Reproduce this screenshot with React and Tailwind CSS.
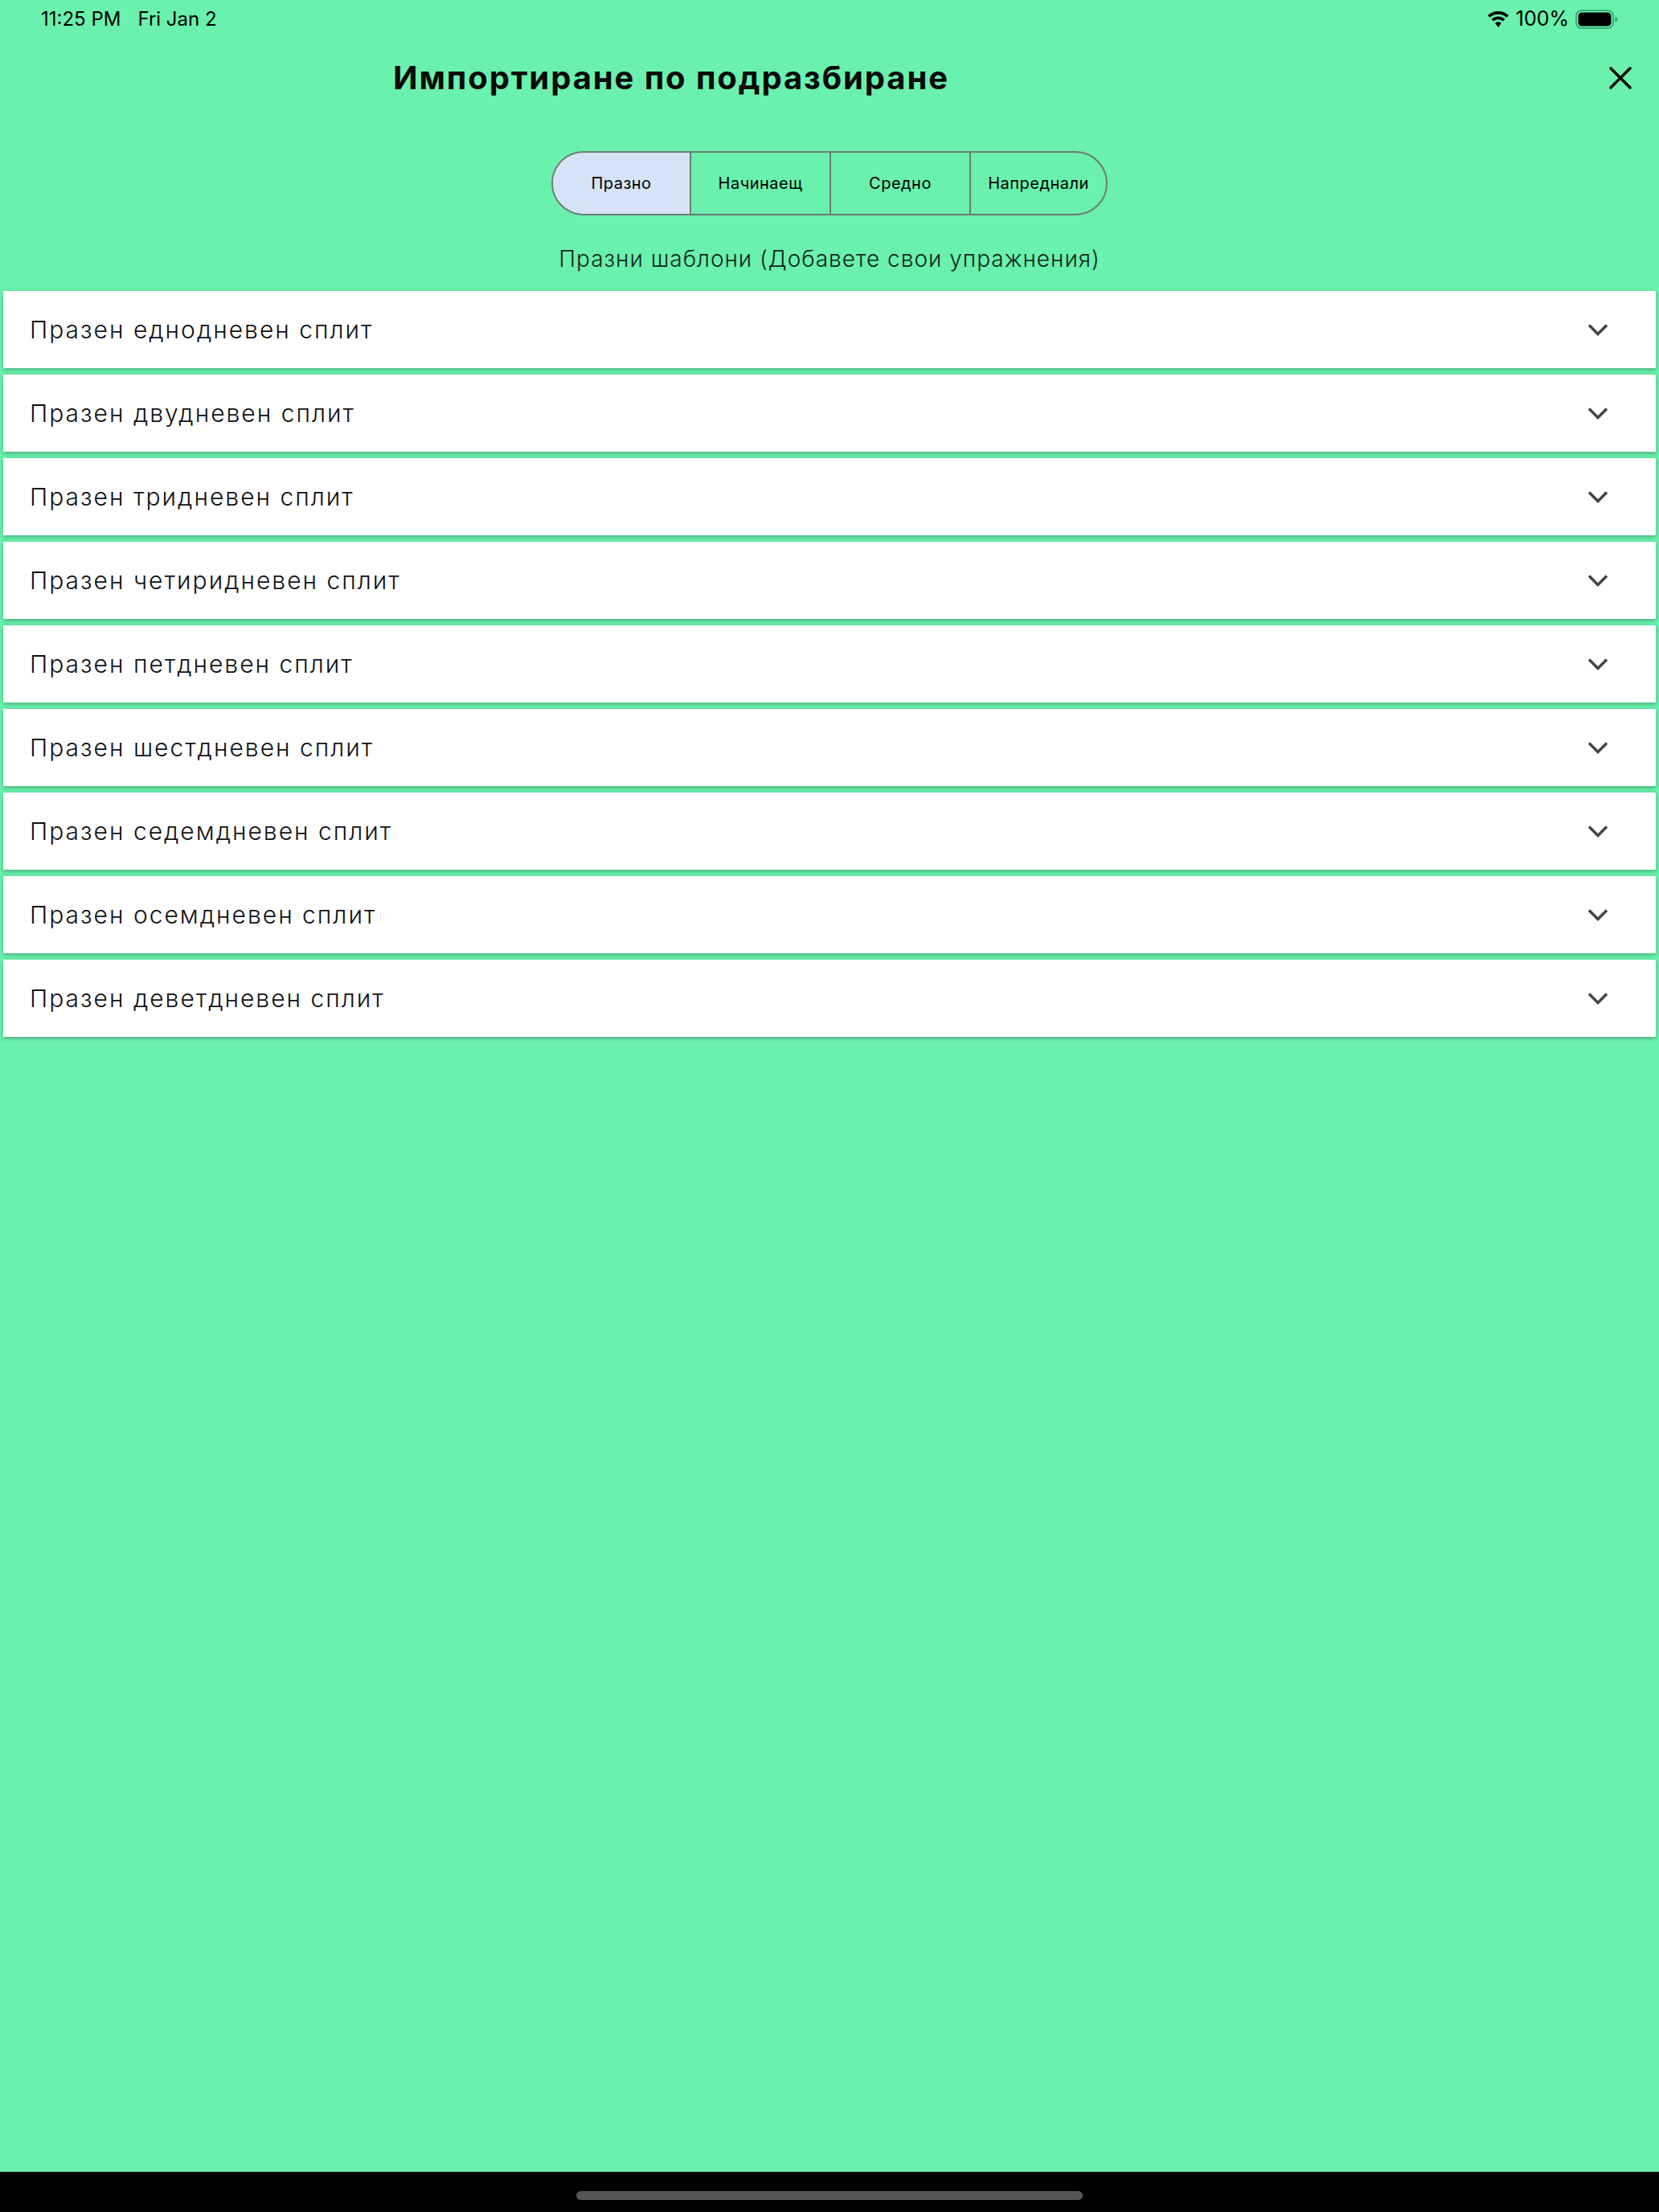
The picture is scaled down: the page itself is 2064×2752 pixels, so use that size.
const SPLITS = [
  'Празен еднодневен сплит',
  'Празен двудневен сплит',
  'Празен тридневен сплит',
  'Празен четиридневен сплит',
  'Празен петдневен сплит',
  'Празен шестдневен сплит',
  'Празен седемдневен сплит',
  'Празен осемдневен сплит',
  'Празен деветдневен сплит',
];

const TABS = [
  { label: 'Празно', className: 'w-[170px] bg-[#d6e3f7]' },
  { label: 'Начинаещ', className: 'w-[174px] border-l-2 border-[#6f7a74]' },
  { label: 'Средно', className: 'w-[174px] border-l-2 border-[#6f7a74]' },
  { label: 'Напреднали', className: 'flex-1 border-l-2 border-[#6f7a74]' },
];

function WifiIcon() {
  return (
    <svg width="28" height="21" viewBox="0 0 28 21" fill="black">
      <path d="M14 3.800c4 0 7.600 1.500 10.300 4.100l2.700-2.800C23.600 1.900 19 0 14 0S4.400 1.900 1 5.100l2.700 2.800C6.400 5.300 10 3.800 14 3.800z" />
      <path d="M14 10.300c2.200 0 4.200.8 5.700 2.200l2.700-2.800c-2.200-2-5.200-3.300-8.400-3.300s-6.200 1.300-8.400 3.300l2.700 2.800c1.500-1.400 3.500-2.200 5.700-2.200z" />
      <path d="M14 13.200c-1.500 0-2.900.6-3.900 1.500L14 20l3.900-5.300c-1-.9-2.400-1.500-3.900-1.500z" />
    </svg>
  );
}

function BatteryIcon() {
  return (
    <svg width="52" height="24" viewBox="0 0 52 24">
      <rect x="1" y="1" width="46" height="22" rx="6.500" fill="none" stroke="#2f9c6c" strokeWidth="1.500" />
      <rect x="3.500" y="3.500" width="41" height="17" rx="4.500" fill="black" />
      <path d="M49.500 8.500c1.500.5 2.500 2 2.500 3.500s-1 3-2.500 3.500z" fill="#2f9c6c" />
    </svg>
  );
}

function Chevron() {
  return (
    <svg width="26" height="16" viewBox="0 0 26 16" fill="none" stroke="#444444" strokeWidth="3.500">
      <path d="M2 2.500l11 11 11-11" />
    </svg>
  );
}

export default function App() {
  return (
    <div lang="bg" className="w-[2064px] h-[2752px] flex flex-col bg-[#69f1ad] text-black font-['Inter','Noto_Sans',sans-serif]">
      {/* status bar */}
      <div className="h-[48px] pl-[51px] pr-[52px] flex items-center justify-between text-[24px] font-normal">
        <div className="flex gap-[21px]">
          <span>11:25 PM</span>
          <span>Fri Jan 2</span>
        </div>
        <div className="flex items-center">
          <WifiIcon />
          <span className="ml-[8px] mr-[8px] text-[25px]">100%</span>
          <BatteryIcon />
        </div>
      </div>

      {/* header */}
      <div className="h-[98px] pl-[489px] pr-[33px] flex items-center justify-between">
        <h1 className="text-[40px] font-bold tracking-[1.900px] text-[#0a0a0a]">Импортиране по подразбиране</h1>
        <svg width="30" height="30" viewBox="0 0 30 30" fill="none" stroke="black" strokeWidth="3.500" strokeLinecap="round">
          <path d="M3 3l24 24M27 3L3 27" />
        </svg>
      </div>

      {/* level tabs */}
      <div className="mt-[42px] flex justify-center">
        <div className="w-[692px] h-[80px] flex rounded-[40px] border-2 border-[#6f7a74] overflow-hidden">
          {TABS.map((tab) => (
            <div key={tab.label} className={`flex items-center justify-center text-[20px] tracking-[0.5px] ${tab.className}`}>
              {tab.label}
            </div>
          ))}
        </div>
      </div>

      <p className="mt-[34px] h-[40px] flex items-center justify-center text-[28px] font-light tracking-[1px] text-[#10261b]">
        Празни шаблони (Добавете свои упражнения)
      </p>

      {/* split list */}
      <div className="mt-[20px] px-[4px] flex flex-col gap-[8px]">
        {SPLITS.map((name) => (
          <div
            key={name}
            className="h-[96px] pl-[33px] pr-[59px] flex items-center justify-between bg-white shadow-[0_2px_5px_rgba(0,0,0,0.28)]"
          >
            <span className="text-[30px] font-light tracking-[2px] text-[#111113]">{name}</span>
            <Chevron />
          </div>
        ))}
      </div>

      <div className="flex-1" />

      {/* home indicator */}
      <div className="h-[50px] pt-[24px] flex justify-center bg-black">
        <div className="w-[630px] h-[11px] rounded-full bg-[#555555]" />
      </div>
    </div>
  );
}
